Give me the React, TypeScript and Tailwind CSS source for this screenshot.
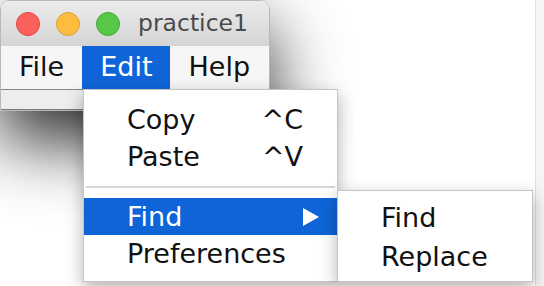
const menuItem = "flex h-[37px] items-center leading-[37px]"

function TrafficLights() {
  return (
    <div className="flex items-center gap-[16px]">
      <span className="h-[24px] w-[24px] rounded-full border border-[#e0443e] bg-[#fc605c]" />
      <span className="h-[24px] w-[24px] rounded-full border border-[#dea236] bg-[#fdbc40]" />
      <span className="h-[24px] w-[24px] rounded-full border border-[#3dab35] bg-[#58c649]" />
    </div>
  )
}

function Window() {
  return (
    <div className="w-[270px] overflow-hidden rounded-t-[9px] border border-[#b9b9b9] shadow-[0_30px_70px_rgba(0,0,0,0.85)]">
      <div className="flex h-[45px] items-center bg-gradient-to-b from-[#ebebeb] to-[#d5d5d5] pl-[15px]">
        <TrafficLights />
        <span className="ml-[18px] text-[23.5px] text-[#4a4a4a]">practice1</span>
      </div>
      <div className="flex h-[44px] border-b border-[#858585] bg-[#f6f6f6] leading-[42px]">
        <span className="px-[18px]">File</span>
        <span className="bg-[#0f65d8] px-[18px] text-white">Edit</span>
        <span className="px-[18px]">Help</span>
      </div>
      <div className="h-[20px] border-b border-[#7a7a7a] bg-[#ededed]" />
    </div>
  )
}

function EditMenu() {
  return (
    <div className="absolute left-[83px] top-[89px] h-[193px] w-[255px] border border-[#c4c4c4] bg-white pt-[11px] shadow-[0_6px_16px_rgba(0,0,0,0.3)]">
      <div className={`${menuItem} justify-between pl-[43px] pr-[34px]`}>
        <span>Copy</span>
        <span>^C</span>
      </div>
      <div className={`${menuItem} justify-between pl-[43px] pr-[34px]`}>
        <span>Paste</span>
        <span>^V</span>
      </div>
      <div className="flex h-[23px] items-center px-[2px]">
        <div className="h-[2px] w-full bg-[#d6d6d6]" />
      </div>
      <div className={`${menuItem} justify-between bg-[#0f65d8] pl-[43px] pr-[18px] text-white`}>
        <span>Find</span>
        <svg width="16" height="18" viewBox="0 0 16 18">
          <path d="M0 0 L16 9 L0 18 Z" fill="white" />
        </svg>
      </div>
      <div className={`${menuItem} pl-[43px]`}>
        <span>Preferences</span>
      </div>
    </div>
  )
}

function FindSubmenu() {
  return (
    <div className="absolute left-[337px] top-[190px] h-[92px] w-[196px] border border-[#c4c4c4] bg-white pl-[43px] pt-[7px] shadow-[0_6px_16px_rgba(0,0,0,0.3)]">
      <div className="h-[39px] leading-[39px]">Find</div>
      <div className="h-[39px] leading-[39px]">Replace</div>
    </div>
  )
}

export default function App() {
  return (
    <div className="relative h-[286px] w-[544px] overflow-hidden bg-white font-['DejaVu_Sans',sans-serif] text-[27px] text-[#111]">
      <div className="absolute right-0 top-0 h-full w-[9px] border-l border-[#e2e2e2] bg-[#f5f5f5]" />
      <Window />
      <EditMenu />
      <FindSubmenu />
    </div>
  )
}
